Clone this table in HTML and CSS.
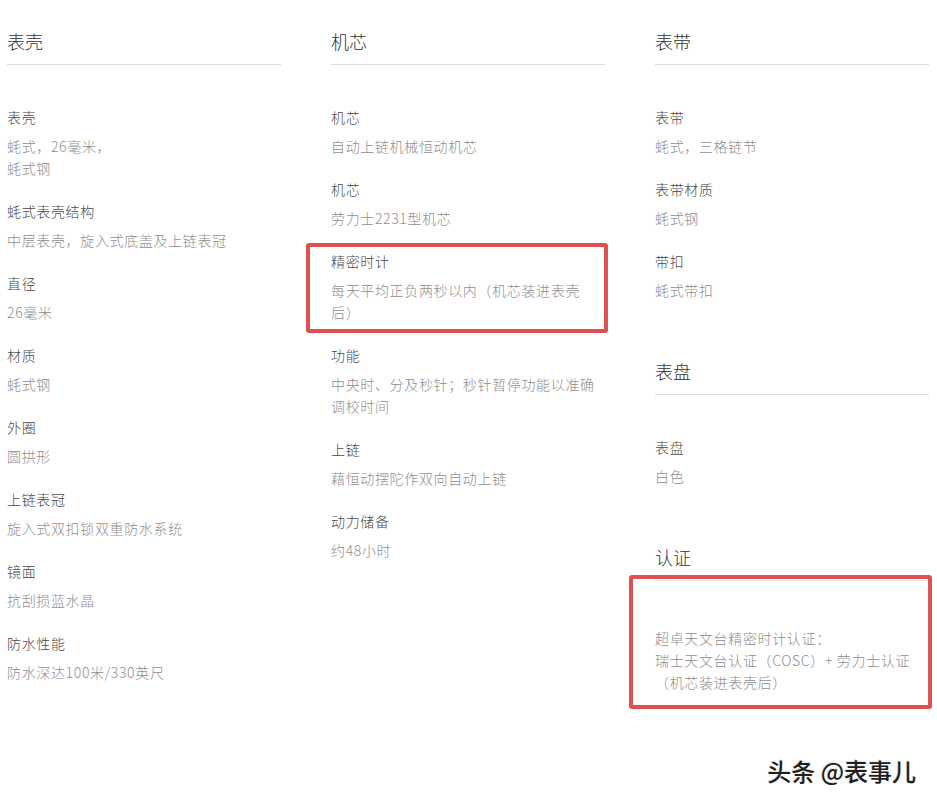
FILE: index.html
```html
<!DOCTYPE html>
<html>
<head>
  <meta charset="utf-8">
  <title>劳力士 腕表规格</title>
  <link rel="stylesheet" href="styles.css">
</head>
<body>

  <div class="specs">
    <div class="column">
      <div class="section">
        <h3>表壳</h3>
        <div class="list">
          <div class="item">
            <div class="label">表壳</div>
            <div class="value">蚝式，26毫米，<br>蚝式钢</div>
          </div>
          <div class="item">
            <div class="label">蚝式表壳结构</div>
            <div class="value">中层表壳，旋入式底盖及上链表冠</div>
          </div>
          <div class="item">
            <div class="label">直径</div>
            <div class="value">26毫米</div>
          </div>
          <div class="item">
            <div class="label">材质</div>
            <div class="value">蚝式钢</div>
          </div>
          <div class="item">
            <div class="label">外圈</div>
            <div class="value">圆拱形</div>
          </div>
          <div class="item">
            <div class="label">上链表冠</div>
            <div class="value">旋入式双扣锁双重防水系统</div>
          </div>
          <div class="item">
            <div class="label">镜面</div>
            <div class="value">抗刮损蓝水晶</div>
          </div>
          <div class="item">
            <div class="label">防水性能</div>
            <div class="value">防水深达100米/330英尺</div>
          </div>
        </div>
      </div>
    </div>

    <div class="column">
      <div class="section">
        <h3>机芯</h3>
        <div class="list">
          <div class="item">
            <div class="label">机芯</div>
            <div class="value">自动上链机械恒动机芯</div>
          </div>
          <div class="item">
            <div class="label">机芯</div>
            <div class="value">劳力士2231型机芯</div>
          </div>
          <div class="item marked">
            <div class="label">精密时计</div>
            <div class="value">每天平均正负两秒以内（机芯装进表壳后）</div>
          </div>
          <div class="item">
            <div class="label">功能</div>
            <div class="value">中央时、分及秒针；秒针暂停功能以准确调校时间</div>
          </div>
          <div class="item">
            <div class="label">上链</div>
            <div class="value">藉恒动摆陀作双向自动上链</div>
          </div>
          <div class="item">
            <div class="label">动力储备</div>
            <div class="value">约48小时</div>
          </div>
        </div>
      </div>
    </div>

    <div class="column">
      <div class="section">
        <h3>表带</h3>
        <div class="list">
          <div class="item">
            <div class="label">表带</div>
            <div class="value">蚝式，三格链节</div>
          </div>
          <div class="item">
            <div class="label">表带材质</div>
            <div class="value">蚝式钢</div>
          </div>
          <div class="item">
            <div class="label">带扣</div>
            <div class="value">蚝式带扣</div>
          </div>
        </div>
      </div>

      <div class="section">
        <h3>表盘</h3>
        <div class="list">
          <div class="item">
            <div class="label">表盘</div>
            <div class="value">白色</div>
          </div>
        </div>
      </div>

      <div class="section">
        <h3>认证</h3>
        <div class="list">
          <div class="item marked wide">
            <div class="label"></div>
            <div class="value">超卓天文台精密时计认证：<br>瑞士天文台认证（COSC）+ 劳力士认证（机芯装进表壳后）</div>
          </div>
        </div>
      </div>
    </div>
  </div>

  <div class="watermark">头条 @表事儿</div>

</body>
</html>
```

FILE: styles.css
```css
body {
  margin: 0;
  padding: 0;
  background-color: white;
  font-family: "Noto Sans CJK SC", "Liberation Sans", sans-serif;
  font-weight: 300;
  text-spacing-trim: space-all;
  height: 806px;
  position: relative;
  overflow: hidden;
}

.specs {
  display: flex;
  gap: 50px;
  padding: 29px 0 0 7px;
}

.column {
  width: 274px;
  display: flex;
  flex-direction: column;
  gap: 58px;
}

.section h3 {
  margin: 0;
  font-size: 18px;
  font-weight: 300;
  line-height: 24px;
  color: #333;
  padding-bottom: 11px;
  border-bottom: 1px solid #dedede;
}

.list {
  padding-top: 40px;
  display: flex;
  flex-direction: column;
  gap: 20px;
}

.item {
  position: relative;
}

.item .label {
  font-size: 14px;
  letter-spacing: 0.65px;
  line-height: 24px;
  color: #4a4a4a;
}

.item .value {
  margin-top: 6px;
  font-size: 14px;
  letter-spacing: 0.65px;
  line-height: 22px;
  color: #8e8e8e;
}

/* red annotation frame */
.item.marked::after {
  content: '';
  position: absolute;
  top: -6px;
  left: -25px;
  right: -3px;
  bottom: -10px;
  border: 4px solid #e04f52;
  border-radius: 3px;
}

.item.wide::after {
  top: -46px;
  left: -26px;
  right: -3px;
  bottom: -16px;
}

.watermark {
  position: absolute;
  right: 21px;
  bottom: 18px;
  font-size: 24px;
  font-weight: 500;
  color: #1e1e1e;
  text-shadow: 1px 1px 0 #fff, -1px -1px 0 rgba(0, 0, 0, 0.15);
}
```
